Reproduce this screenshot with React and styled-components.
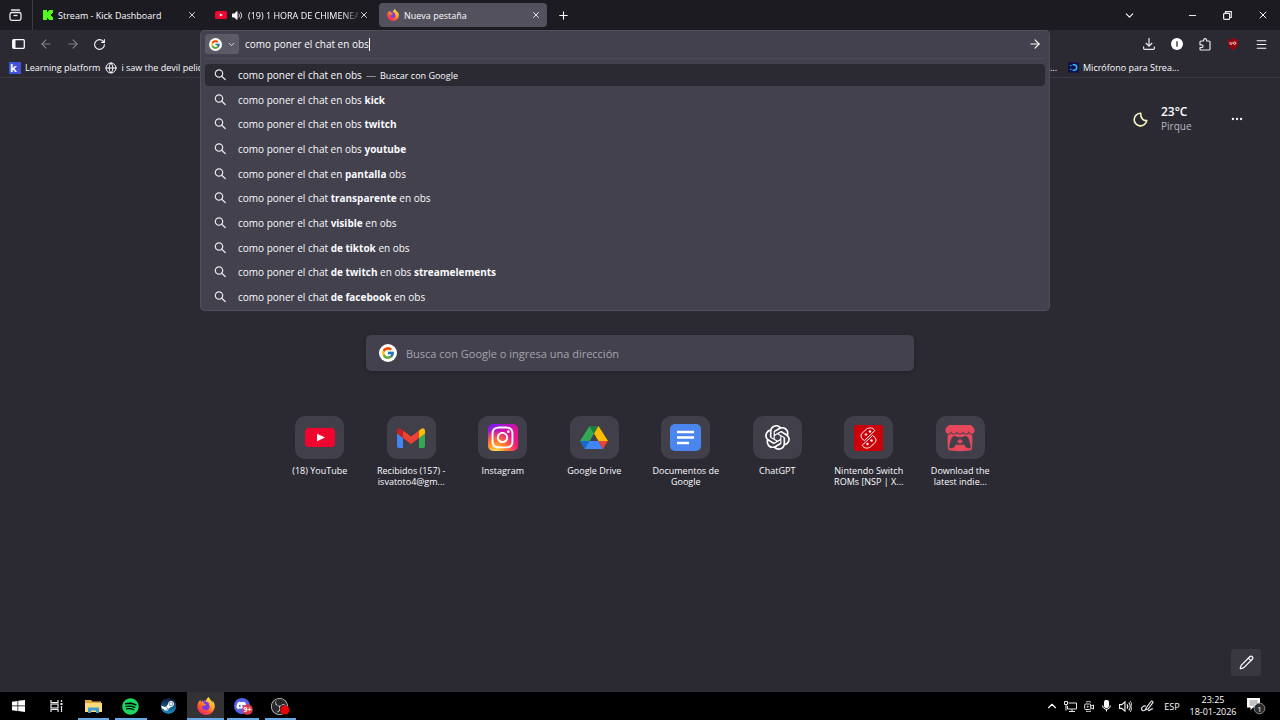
import React from 'react';
import styled, { createGlobalStyle, css } from 'styled-components';
import {
  ArrowLeft, ArrowRight, ChevronDown, ChevronUp, Ellipsis, Globe, Menu, Minus, Pencil, Plus, RotateCw, X,
} from 'lucide-react';
import { FaDiscord, FaInstagram, FaItchIo, FaSpotify, FaSteam } from 'react-icons/fa';
import { FcGoogle } from 'react-icons/fc';
import { SiFirefoxbrowser, SiObsstudio, SiOpenai } from 'react-icons/si';

const GlobalStyle = createGlobalStyle`
  * {
    box-sizing: border-box;
  }
  body {
    margin: 0;
    background: #2b2a33;
    color: #fbfbfe;
    font-family: "Open Sans", "Noto Sans", sans-serif;
    font-size: 10px;
  }
  button, input {
    font: inherit;
    color: inherit;
    border: 0;
    padding: 0;
    background: none;
  }
  svg {
    display: block;
    flex: none;
  }
`;

const Window = styled.div`
  display: flex;
  flex-direction: column;
  min-height: 100vh;
  overflow: hidden;
`;

/* ---------- tab strip ---------- */
const TabStrip = styled.header`
  display: flex;
  align-items: center;
  height: 30px;
  background: #1c1b22;
`;
const IconButton = styled.button`
  display: flex;
  align-items: center;
  justify-content: center;
  flex: none;
  width: ${(p) => p.$width || 28}px;
  height: ${(p) => p.$height || 24}px;
  opacity: ${(p) => (p.disabled ? 0.4 : 1)};
`;
const ViewButton = styled(IconButton)`
  border-right: 1px solid #3c3b44;
  padding-right: 2px;
`;
const Tabs = styled.div`
  display: flex;
  gap: 4px;
  padding-left: 2px;
`;
const Tab = styled.div`
  display: flex;
  align-items: center;
  width: 168px;
  height: 24px;
  padding: 0 6px 0 8px;
  gap: 5px;
  border-radius: 4px;
  background: ${(p) => (p.$active ? '#52515d' : 'transparent')};
  font-size: 9px;
`;
const TabTitle = styled.span`
  flex: 1;
  min-width: 0;
  white-space: nowrap;
  ${(p) => p.$fade && css`
    mask-image: linear-gradient(to right, #000 85%, rgba(0, 0, 0, 0.2));
  `}
`;
const CloseButton = styled(IconButton)`
  margin-left: -4px;
`;
const Spacer = styled.div`
  flex: 1;
`;
const ListTabs = styled(IconButton)`
  margin-right: 34px;
`;

/* ---------- navigation bar ---------- */
const NavBar = styled.nav`
  display: flex;
  height: 30px;
`;
const NavLeft = styled.div`
  display: flex;
  align-items: center;
  width: 200px;
  padding: 0 0 2px 5px;
`;
const NavRight = styled(NavLeft)`
  width: 230px;
  padding: 0 5px 2px 0;
  justify-content: flex-end;
`;
const UrlWrap = styled.div`
  position: relative;
  flex: 1;
`;
const UrlPanel = styled.div`
  position: absolute;
  top: 0;
  left: 0;
  right: 0;
  z-index: 2;
  padding: 0 5px 3px;
  border-radius: 5px;
  background: #42414d;
  box-shadow: inset 0 0 0 1px #50505c;
`;
const UrlRow = styled.div`
  display: flex;
  align-items: center;
  height: 28px;
`;
const EngineButton = styled.button`
  display: flex;
  align-items: center;
  gap: 5px;
  width: 34px;
  height: 20px;
  padding-left: 4px;
  margin-right: 6px;
  border-radius: 3px;
  background: #5b5a66;
`;
const UrlInput = styled.input`
  field-sizing: content;
  outline: 0;
`;
const Caret = styled.span`
  width: 1px;
  height: 13px;
  background: #fbfbfe;
`;
const Suggestions = styled.ul`
  display: flex;
  flex-direction: column;
  justify-content: space-between;
  height: 250px;
  margin: 0;
  padding: 5px 0 0;
  list-style: none;
  border-top: 1px solid #4b4a56;
`;
const Suggestion = styled.li`
  display: flex;
  align-items: center;
  height: 22px;
  padding-left: 9px;
  gap: 12px;
  border-radius: 4px;
  background: ${(p) => (p.$selected ? '#2b2a33' : 'transparent')};

  b {
    font-weight: 700;
  }
`;
const Action = styled.span`
  font-size: 9px;

  &::before {
    content: '—';
    margin: 0 4px;
    font-size: 10px;
    color: #8f8e99;
  }
`;

/* ---------- bookmarks ---------- */
const Bookmarks = styled.div`
  display: flex;
  align-items: center;
  height: 18px;
  padding: 0 101px 2px 9px;
  gap: 5px;
  border-bottom: 1px solid #3a3943;
  font-size: 9px;
`;
const Bookmark = styled.a`
  display: flex;
  align-items: center;
  gap: 4px;
  color: inherit;
  white-space: nowrap;
  text-decoration: none;
`;
const More = styled.span`
  margin-right: 6px;
`;
const KSquare = styled.span`
  width: 12px;
  height: 12px;
  background: #4353d8;
  font-size: 11px;
  font-weight: 700;
  line-height: 12px;
  padding-left: 1px;
`;

/* ---------- new tab page ---------- */
const Page = styled.main`
  display: flex;
  flex-direction: column;
  flex: 1;
  padding: 27px 19px 16px;
`;
const Weather = styled.section`
  display: flex;
  align-items: center;
  align-self: flex-end;
  height: 28px;
  margin-right: 17px;
  gap: 13px;
`;
const Forecast = styled.div`
  width: 56px;
  line-height: 14px;
  color: #b9b8c0;
`;
const Degrees = styled.div`
  font-size: 12px;
  font-weight: 600;
  color: #fbfbfe;
`;
const SearchBox = styled.label`
  display: flex;
  align-items: center;
  align-self: center;
  width: 548px;
  max-width: 100%;
  height: 36px;
  margin-top: 202px;
  padding: 0 13px;
  gap: 9px;
  border-radius: 5px;
  background: #42414d;
  box-shadow: 0 1px 4px rgba(20, 20, 30, 0.4);
`;
const SearchInput = styled.input`
  flex: 1;
  font-size: 11px;
  outline: 0;

  &::placeholder {
    color: #a5a4ad;
    opacity: 1;
  }
`;
const Shortcuts = styled.div`
  display: grid;
  grid-template-columns: repeat(8, 1fr);
  align-self: center;
  width: 732px;
  max-width: 100%;
  margin-top: 45px;
`;
const Shortcut = styled.a`
  display: flex;
  flex-direction: column;
  align-items: center;
  gap: 6px;
  color: inherit;
  font-size: 9px;
  line-height: 11px;
  text-align: center;
  text-decoration: none;
  white-space: pre;
`;
const Tile = styled.span`
  display: flex;
  align-items: center;
  justify-content: center;
  width: 49px;
  height: 43px;
  border-radius: 10px;
  background: #403f4a;
`;
const Instagram = styled.span`
  display: flex;
  align-items: center;
  justify-content: center;
  width: 30px;
  height: 27px;
  border-radius: 5px;
  background:
    radial-gradient(circle at 25% 105%, #ffd64a 5%, #ff7a2a 32%, transparent 62%),
    linear-gradient(155deg, #7a1cf5 5%, #e0109a 40%, #ff1578);
`;
const EditButton = styled.button`
  display: flex;
  align-items: center;
  justify-content: center;
  align-self: flex-end;
  width: 30px;
  height: 27px;
  margin-top: auto;
  border-radius: 3px;
  background: #393841;
`;

/* ---------- taskbar ---------- */
const Taskbar = styled.footer`
  display: flex;
  justify-content: space-between;
  height: 28px;
  background: #000;
`;
const Apps = styled.div`
  display: flex;
  width: 299px;
`;
const TaskButton = styled.button`
  position: relative;
  display: flex;
  flex: 1;
  align-items: center;
  justify-content: center;
  background: ${(p) => (p.$active ? '#333335' : 'transparent')};

  ${(p) => p.$open && css`
    &::after {
      content: '';
      position: absolute;
      bottom: 0;
      left: ${p.$active ? 0 : 3}px;
      right: ${p.$active ? 0 : 3}px;
      height: 2px;
      background: #66a9e6;
    }
  `}
`;
const Tray = styled.div`
  display: flex;
  align-items: center;
  padding-right: 14px;
`;
const Lang = styled.span`
  width: 28px;
  margin-right: 3px;
  text-align: center;
  font-size: 9px;
`;
const Clock = styled.time`
  width: 48px;
  margin-right: 10px;
  text-align: center;
  font-size: 9px;
  line-height: 12px;
`;

/* ---------- drawings ---------- */
const GoogleG = ({ size }) => (
  <svg width={size} height={size} viewBox="0 0 18 18">
    <circle cx="9" cy="9" r="9" fill="#fff" />
    <FcGoogle x="2" y="2" size={14} />
  </svg>
);

const YouTube = ({ w, h }) => (
  <svg width={w} height={h} viewBox="0 0 30 20" preserveAspectRatio="none">
    <rect width="30" height="20" rx="4" fill="#f0052f" />
    <path d="M12 6l8 4-8 4z" fill="#fff" />
  </svg>
);

const Firefox = ({ size, id }) => (
  <svg width={size} height={size} viewBox="0 0 24 24">
    <defs>
      <linearGradient id={id} x1="0.85" y1="0" x2="0.2" y2="1">
        <stop offset="0" stopColor="#fff14a" />
        <stop offset="0.35" stopColor="#ffb02a" />
        <stop offset="0.65" stopColor="#ff5a30" />
        <stop offset="1" stopColor="#e81c70" />
      </linearGradient>
    </defs>
    <circle cx="12" cy="12" r="8" fill="#7a3be0" />
    <SiFirefoxbrowser size={24} fill={`url(#${id})`} />
  </svg>
);

const Kick = () => (
  <svg width="10" height="10" viewBox="0 0 10 10">
    <path d="M0 0h4v2h1V1h1V0h4v3H9v1H8v2h1v1h1v3H6V9H5V8H4v2H0z" fill="#53fc18" />
  </svg>
);

const Magnifier = () => (
  <svg width="12" height="12" viewBox="0 0 12 12" fill="none" stroke="#e8e8ee" strokeWidth="1.2">
    <circle cx="5" cy="4.500" r="3.700" />
    <path d="M7.700 7.200l3.500 3.300" strokeLinecap="round" />
  </svg>
);

const Gmail = () => (
  <svg width="28" height="20" viewBox="0 0 28 20">
    <path d="M0 5l6 4.500V20H2a2 2 0 0 1-2-2z" fill="#4285f4" />
    <path d="M28 5l-6 4.500V20h4a2 2 0 0 0 2-2z" fill="#34a853" />
    <path d="M22 2.500L24 1c2-1.500 4-.2 4 2v2.500L22 10z" fill="#fbbc04" />
    <path d="M6 2.500l8 6 8-6V10l-8 6-8-6z" fill="#ea4335" />
    <path d="M0 3c0-2.200 2-3.500 4-2l2 1.500V10L0 5.500z" fill="#c5221f" />
  </svg>
);

const Drive = () => (
  <svg width="28" height="23" viewBox="0 0 28 23">
    <path d="M9.500 0L14 7.500 5 23 0 15z" fill="#34a853" />
    <path d="M9.500 0h9L14 7.500z" fill="#188038" />
    <path d="M18.500 0L28 15h-9.500L14 7.500z" fill="#fbbc04" />
    <path d="M0 15h9.500L5 23z" fill="#1967d2" />
    <path d="M9.500 15h9L23 23H5z" fill="#4285f4" />
    <path d="M18.500 15H28l-5 8z" fill="#ea4335" />
  </svg>
);

const Docs = () => (
  <svg width="31" height="27" viewBox="0 0 31 27">
    <rect width="31" height="27" rx="5" fill="#4a86ee" />
    <path d="M7 8h17M7 13.500h17M7 19h12" stroke="#fff" strokeWidth="2.600" />
  </svg>
);

const Roms = () => (
  <svg width="29" height="26" viewBox="0 0 29 26">
    <rect width="29" height="26" rx="2" fill="#cc0008" />
    <g fill="none" stroke="#fff">
      <path d="M9 14.500C6.500 12.500 6.500 9.500 8.500 7.800l4-3.600C14.500 2.500 18 2.300 20 4.500l.8 1.200L10.500 15.500z" />
      <path d="M20 11.500c2.500 2 2.500 5 .5 6.700l-4 3.600c-2 1.700-5.500 1.900-7.500-.3l-.8-1.200L18.500 10.500z" />
      <path d="M12 8v3M10.500 9.500h3" strokeWidth=".8" />
    </g>
    <circle cx="16" cy="6.500" r="1.200" fill="#fff" />
    <circle cx="17.500" cy="15.500" r="1.200" fill="#fff" />
    <circle cx="13.500" cy="19" r="1.200" fill="#fff" />
  </svg>
);

const Moon = () => (
  <svg width="16" height="15" viewBox="0 0 16 15">
    <path d="M8.800 1.300A6.300 6.300 0 1 0 14.700 8.600C11.500 9 8.200 6 8.800 1.300z" fill="none" stroke="#f7f6c0" strokeWidth="1.600" strokeLinejoin="round" />
  </svg>
);

const ViewIcon = () => (
  <svg width="13" height="12" viewBox="0 0 13 12" fill="none" stroke="#e8e8ee" strokeWidth="1.300">
    <path d="M2.500 1h8" strokeLinecap="round" />
    <rect x="1" y="3.500" width="11" height="7.800" rx="1.800" />
    <path d="M4.500 6.500h4" />
  </svg>
);

const SidebarIcon = () => (
  <svg width="13" height="10" viewBox="0 0 13 10">
    <rect x=".7" y=".7" width="11.600" height="8.600" rx="1" fill="none" stroke="#fbfbfe" strokeWidth="1.300" />
    <path d="M1 1h2.500v8H1z" fill="#fbfbfe" />
  </svg>
);

const Speaker = ({ size = 11, outline }) => (
  <svg width={size} height={size} viewBox="0 0 12 12" fill="none" stroke="#fbfbfe">
    <path d="M.5 4.300h2L5.500 1.700v8.600l-3-2.600h-2z" fill={outline ? 'none' : '#fbfbfe'} />
    <path d="M7.300 4c1 1.200 1 2.800 0 4M9 2.400c1.900 2 1.900 5.200 0 7.200" />
    {outline && <path d="M10.400 1c2 3 2 7 0 10" strokeWidth=".8" />}
  </svg>
);

const Restore = () => (
  <svg width="9" height="9" viewBox="0 0 9 9" fill="none" stroke="#e8e8ee" strokeWidth="1.200">
    <rect x=".6" y="2.400" width="6" height="6" rx="1" />
    <path d="M2.500 2V.7h5.800v5.800H7" />
  </svg>
);

const DownloadIcon = () => (
  <svg width="12" height="12" viewBox="0 0 12 12" fill="none" stroke="#e8e8ee" strokeWidth="1.200">
    <path d="M6 0v8M2.800 5L6 8.200 9.200 5M.6 8.500v1.700c0 .8.400 1.200 1.200 1.200h8.400c.8 0 1.200-.4 1.200-1.200V8.500" />
  </svg>
);

const AccountIcon = () => (
  <svg width="12" height="12" viewBox="0 0 12 12">
    <circle cx="6" cy="6" r="6" fill="#fff" />
    <path d="M6 3.200v5.600" stroke="#2b2a33" strokeWidth="1.300" />
  </svg>
);

const ExtensionIcon = () => (
  <svg width="12" height="13" viewBox="0 0 12 13">
    <path d="M1 5.500V4c0-.6.400-1 1-1h2.600V2.200a1.500 1.500 0 0 1 3 0V3H10c.6 0 1 .4 1 1v7c0 .6-.4 1-1 1H2c-.6 0-1-.4-1-1V9.500h1.700a1.300 1.300 0 0 0 0-2.700H1z" fill="none" stroke="#e8e8ee" strokeWidth="1.200" strokeLinejoin="round" />
  </svg>
);

const Shield = () => (
  <svg width="12" height="12" viewBox="0 0 12 12">
    <path d="M6 0c1.700 1 3.400 1.500 5.300 1.500C11.500 7 10 10 6 12 2 10 .5 7 .7 1.500 2.600 1.500 4.300 1 6 0z" fill="#94060f" />
    <path d="M3 4v1.500c0 1.300 2 1.300 2 0V4" fill="none" stroke="#fff" strokeWidth=".8" />
    <circle cx="7.700" cy="5.200" r="1.200" fill="none" stroke="#fff" strokeWidth=".8" />
  </svg>
);

const MicIcon = () => (
  <svg width="11" height="11" viewBox="0 0 12 11">
    <rect width="12" height="11" fill="#10104a" />
    <path d="M5 2.500h1.500a3 3 0 0 1 0 6H5" fill="none" stroke="#36b8f5" strokeWidth="1.600" />
    <path d="M2 3.500h2M2 7.500h2" stroke="#36b8f5" />
  </svg>
);

const WindowsIcon = () => (
  <svg width="13" height="12" viewBox="0 0 13 12" fill="#fff">
    <path d="M0 1.700l5.500-.8v4.700H0zM6.200.8L13 0v5.600H6.200zM0 6.300h5.500V11L0 10.200zM6.200 6.300H13V12l-6.800-.9z" />
  </svg>
);

const TaskView = () => (
  <svg width="13" height="12" viewBox="0 0 13 12" fill="none" stroke="#e8e8ee" strokeWidth="1.200">
    <path d="M1 0v2.500h7V0M1 12V9.500h7V12M11.500 0v2M11.500 6v6" />
    <rect x="1" y="4" width="7" height="4" />
    <path d="M10.500 3h2v2h-2z" fill="#e8e8ee" stroke="none" />
  </svg>
);

const Folder = () => (
  <svg width="17" height="14" viewBox="0 0 17 14">
    <path d="M0 1h6l1.500 1.500H16V13H0z" fill="#e3a93b" />
    <path d="M0 4h17v9H0z" fill="#ffdb7c" />
    <path d="M3 14V8.500h11V14h-3v-2.500H6V14z" fill="#3c9fd6" />
  </svg>
);

const Steam = () => (
  <svg width="17" height="16" viewBox="0 0 17 16">
    <defs>
      <linearGradient id="steam" x1="0" y1="0" x2="0" y2="1">
        <stop offset="0" stopColor="#101a3c" />
        <stop offset="1" stopColor="#1b8cc4" />
      </linearGradient>
    </defs>
    <circle cx="8.500" cy="8" r="7.300" fill="#fff" />
    <FaSteam x="0.500" y="0" size={16} fill="url(#steam)" />
  </svg>
);

const Discord = () => (
  <svg width="20" height="17" viewBox="0 0 20 17">
    <circle cx="9" cy="8" r="8" fill="#5563e8" />
    <FaDiscord x="3" y="2" size={11} fill="#fff" />
    <circle cx="14.500" cy="11.500" r="5.300" fill="#dc3a48" />
    <text x="14.500" y="14" fontSize="7" fontWeight="700" fill="#fff" textAnchor="middle">9+</text>
  </svg>
);

const Obs = () => (
  <svg width="19" height="17" viewBox="0 0 19 17">
    <circle cx="8.500" cy="8.500" r="8" fill="#28282b" />
    <SiObsstudio x="0" y="0" size={17} fill="#d0d0d2" />
    <circle cx="14" cy="12" r="4.500" fill="#e60008" />
  </svg>
);

const Monitor = () => (
  <svg width="13" height="11" viewBox="0 0 13 11" fill="none" stroke="#e8e8ee">
    <path d="M4.500 2h8v6h-9V5M8 8v2M5 10.500h6M.5.500h3v3h-3zM2 3.500v6" />
  </svg>
);

const Camera = () => (
  <svg width="10" height="11" viewBox="0 0 10 11" fill="none" stroke="#e8e8ee">
    <rect x=".7" y="3" width="6" height="5.500" rx="1" />
    <path d="M7 5l2.500-1v4L7 7M2 1.200C3.500.3 5.500.3 7 1.200M2 10c1.500.8 3.500.8 5 0" />
    <circle cx="3.700" cy="5.700" r=".6" />
  </svg>
);

const Mic = () => (
  <svg width="9" height="12" viewBox="0 0 9 12">
    <rect x="2" width="5" height="8" rx="2" fill="#fff" />
    <path d="M.7 5.500c0 5 7.600 5 7.600 0M4.500 9v2.500" fill="none" stroke="#fff" />
  </svg>
);

const Pen = () => (
  <svg width="13" height="12" viewBox="0 0 13 12" fill="none" stroke="#e8e8ee" strokeWidth="1.200">
    <path d="M5 8l5-6.500c.8-1 2.500.2 1.700 1.300L7 9l-2.500.800zM5 6C1 5.500-.5 9 1.500 10.500c2 1 4-1.500 3.500-3M7 10.500c2 .5 3-2.500 5-1.500" />
  </svg>
);

const Notifications = () => (
  <svg width="19" height="18" viewBox="0 0 19 18">
    <path d="M0 1h13v9.500H6L3.500 13v-2.500H0z" fill="#fff" />
    <path d="M2.500 4h8M2.500 6h8M2.500 8h5" stroke="#555" strokeWidth=".7" />
    <circle cx="12.500" cy="11.500" r="5.300" fill="#2c2c2c" stroke="#8c8c8c" />
    <text x="12.500" y="14.500" fontSize="8" fill="#fff" textAnchor="middle">1</text>
  </svg>
);

/* ---------- data ---------- */
const suggestions = [
  <>como poner el chat en obs <b>kick</b></>,
  <>como poner el chat en obs <b>twitch</b></>,
  <>como poner el chat en obs <b>youtube</b></>,
  <>como poner el chat en <b>pantalla</b> obs</>,
  <>como poner el chat <b>transparente</b> en obs</>,
  <>como poner el chat <b>visible</b> en obs</>,
  <>como poner el chat <b>de tiktok</b> en obs</>,
  <>como poner el chat <b>de twitch</b> en obs <b>streamelements</b></>,
  <>como poner el chat <b>de facebook</b> en obs</>,
];

const shortcuts = [
  { label: '(18) YouTube', icon: <YouTube w={30} h={19} /> },
  { label: 'Recibidos (157) -\nisvatoto4@gm...', icon: <Gmail /> },
  { label: 'Instagram', icon: <Instagram><FaInstagram size={25} color="#fff" /></Instagram> },
  { label: 'Google Drive', icon: <Drive /> },
  { label: 'Documentos de\nGoogle', icon: <Docs /> },
  { label: 'ChatGPT', icon: <SiOpenai size={25} color="#fff" /> },
  { label: 'Nintendo Switch\nROMs [NSP | X...', icon: <Roms /> },
  { label: 'Download the\nlatest indie...', icon: <FaItchIo size={30} color="#e8485c" /> },
];

const apps = [
  { name: 'Inicio', icon: <WindowsIcon /> },
  { name: 'Vista de tareas', icon: <TaskView /> },
  { name: 'Explorador', icon: <Folder />, open: true },
  { name: 'Spotify', icon: <FaSpotify size={17} color="#1ed760" />, open: true },
  { name: 'Steam', icon: <Steam /> },
  { name: 'Firefox', icon: <Firefox size={18} id="ff-task" />, open: true, active: true },
  { name: 'Discord', icon: <Discord />, open: true },
  { name: 'OBS', icon: <Obs />, open: true },
];

const CloseTab = () => (
  <CloseButton $width={10} $height={16} aria-label="Cerrar pestaña"><X size={10} /></CloseButton>
);

function App() {
  return (
    <Window>
      <GlobalStyle />
      <TabStrip>
        <ViewButton $width={33} $height={30} aria-label="Vista"><ViewIcon /></ViewButton>
        <Tabs>
          <Tab>
            <Kick />
            <TabTitle>Stream - Kick Dashboard</TabTitle>
            <CloseTab />
          </Tab>
          <Tab>
            <YouTube w={12} h={8} />
            <Speaker />
            <TabTitle $fade>(19) 1 HORA DE CHIMENEA</TabTitle>
            <CloseTab />
          </Tab>
          <Tab $active>
            <Firefox size={12} id="ff-tab" />
            <TabTitle>Nueva pestaña</TabTitle>
            <CloseTab />
          </Tab>
        </Tabs>
        <IconButton $width={32} aria-label="Nueva pestaña"><Plus size={13} /></IconButton>
        <Spacer />
        <ListTabs $width={24} aria-label="Listar pestañas"><ChevronDown size={13} /></ListTabs>
        <IconButton $width={35} aria-label="Minimizar"><Minus size={11} /></IconButton>
        <IconButton $width={35} aria-label="Restaurar"><Restore /></IconButton>
        <IconButton $width={35} aria-label="Cerrar"><X size={12} /></IconButton>
      </TabStrip>

      <NavBar>
        <NavLeft>
          <IconButton $width={27} aria-label="Barra lateral"><SidebarIcon /></IconButton>
          <IconButton $width={27} disabled aria-label="Atrás"><ArrowLeft size={14} /></IconButton>
          <IconButton $width={27} disabled aria-label="Adelante"><ArrowRight size={14} /></IconButton>
          <IconButton $width={27} aria-label="Recargar"><RotateCw size={13} /></IconButton>
        </NavLeft>
        <UrlWrap>
          <UrlPanel>
            <UrlRow>
              <EngineButton aria-label="Motor de búsqueda">
                <GoogleG size={13} />
                <ChevronDown size={9} />
              </EngineButton>
              <UrlInput aria-label="Dirección" defaultValue="como poner el chat en obs" />
              <Caret />
              <Spacer />
              <IconButton $width={20} aria-label="Ir"><ArrowRight size={14} /></IconButton>
            </UrlRow>
            <Suggestions>
              <Suggestion $selected>
                <Magnifier />
                <span>como poner el chat en obs<Action>Buscar con Google</Action></span>
              </Suggestion>
              {suggestions.map((text, i) => (
                <Suggestion key={i}>
                  <Magnifier />
                  <span>{text}</span>
                </Suggestion>
              ))}
            </Suggestions>
          </UrlPanel>
        </UrlWrap>
        <NavRight>
          <IconButton aria-label="Descargas"><DownloadIcon /></IconButton>
          <IconButton aria-label="Cuenta"><AccountIcon /></IconButton>
          <IconButton aria-label="Extensiones"><ExtensionIcon /></IconButton>
          <IconButton aria-label="uBlock"><Shield /></IconButton>
          <IconButton aria-label="Menú"><Menu size={13} /></IconButton>
        </NavRight>
      </NavBar>

      <Bookmarks>
        <Bookmark href="#"><KSquare>k</KSquare>Learning platform</Bookmark>
        <Bookmark href="#"><Globe size={12} />i saw the devil pelic</Bookmark>
        <Spacer />
        <More>...</More>
        <Bookmark href="#"><MicIcon />Micrófono para Strea...</Bookmark>
      </Bookmarks>

      <Page>
        <Weather>
          <Moon />
          <Forecast>
            <Degrees>23°C</Degrees>
            Pirque
          </Forecast>
          <IconButton $width={14} aria-label="Opciones"><Ellipsis size={14} /></IconButton>
        </Weather>
        <SearchBox>
          <GoogleG size={18} />
          <SearchInput aria-label="Buscar" placeholder="Busca con Google o ingresa una dirección" />
        </SearchBox>
        <Shortcuts>
          {shortcuts.map((s) => (
            <Shortcut key={s.label} href="#">
              <Tile>{s.icon}</Tile>
              {s.label}
            </Shortcut>
          ))}
        </Shortcuts>
        <EditButton aria-label="Personalizar"><Pencil size={15} /></EditButton>
      </Page>

      <Taskbar>
        <Apps>
          {apps.map((a) => (
            <TaskButton key={a.name} aria-label={a.name} $open={a.open} $active={a.active}>{a.icon}</TaskButton>
          ))}
        </Apps>
        <Tray>
          <IconButton $width={18} aria-label="Mostrar ocultos"><ChevronUp size={14} /></IconButton>
          <IconButton $width={19} aria-label="Red"><Monitor /></IconButton>
          <IconButton $width={18} aria-label="Cámara"><Camera /></IconButton>
          <IconButton $width={17} aria-label="Micrófono"><Mic /></IconButton>
          <IconButton $width={21} aria-label="Volumen"><Speaker size={13} outline /></IconButton>
          <IconButton $width={22} aria-label="Lápiz"><Pen /></IconButton>
          <Lang>ESP</Lang>
          <Clock>23:25<br />18-01-2026</Clock>
          <Notifications />
        </Tray>
      </Taskbar>
    </Window>
  );
}

export default App;
